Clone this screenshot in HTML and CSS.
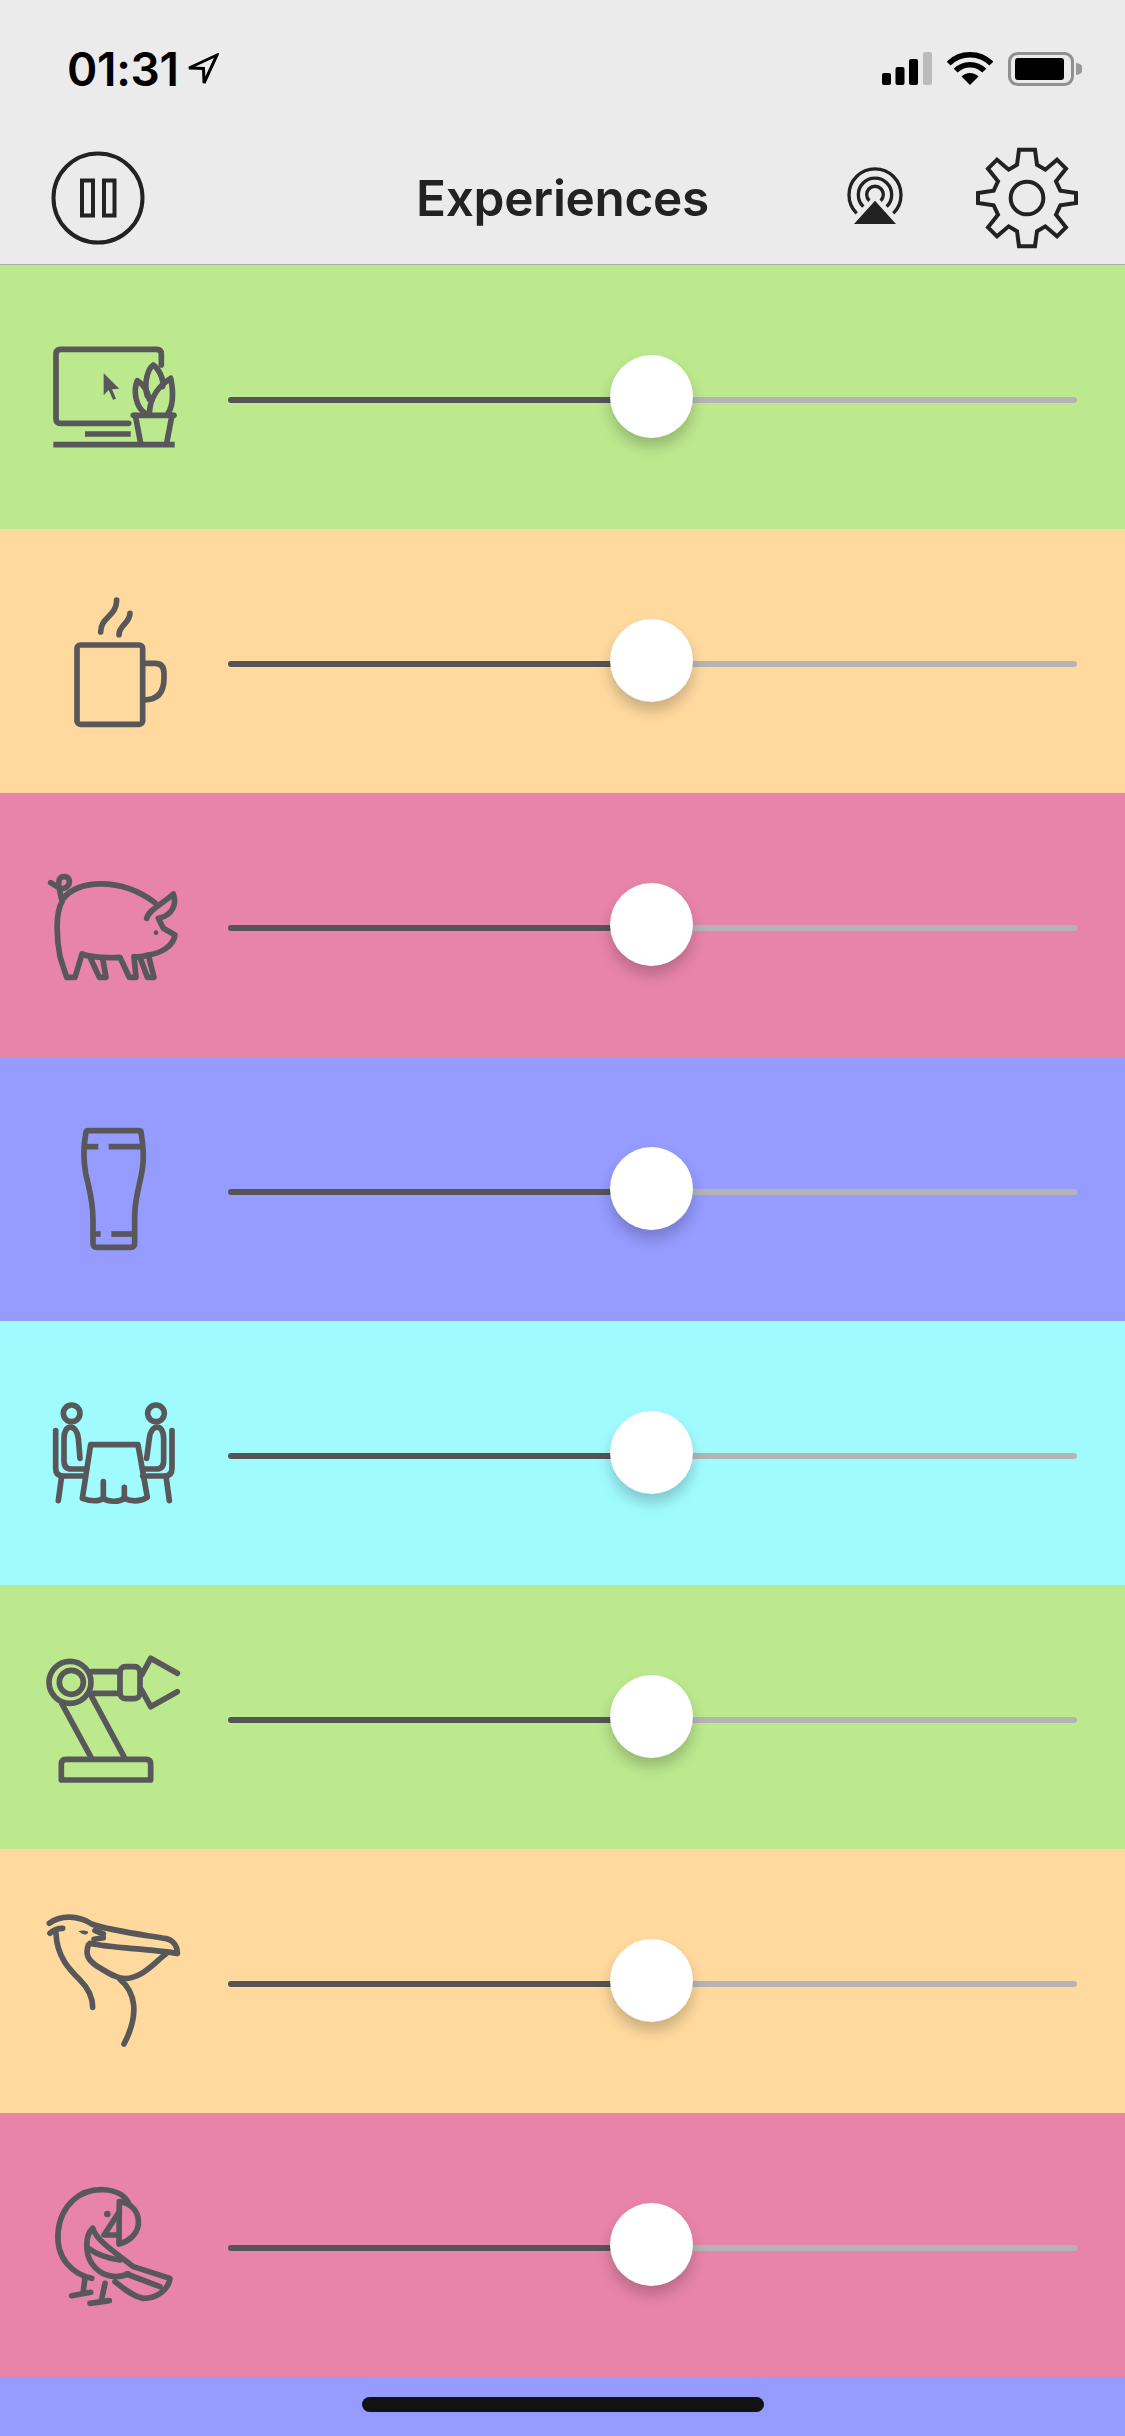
FILE: index.html
```html
<!DOCTYPE html>
<html lang="en">
<head>
  <meta charset="UTF-8">
  <meta name="viewport" content="width=device-width, initial-scale=1.0">
  <title>Experiences</title>
  <link rel="stylesheet" href="styles.css">
</head>
<body>
  <header class="top">
    <div class="status">
      <div class="status-left">
        <span class="time">01:31</span>
        <svg class="arrow" width="32" height="33" viewBox="0 0 32 33"><path d="M30 2 L2 15 L16.5 15.5 L17 30 Z"/></svg>
      </div>
      <div class="status-right">
        <svg width="50" height="33" viewBox="0 0 50 33">
          <rect x="0" y="21" width="9" height="12" rx="2"/>
          <rect x="13.5" y="15" width="9" height="18" rx="2"/>
          <rect x="27" y="7" width="9" height="26" rx="2"/>
          <rect class="bar-off" x="41" y="0" width="9" height="33" rx="2"/>
        </svg>
        <svg class="wifi" width="46" height="33" viewBox="0 0 46 33">
          <path class="wifi-band" d="M1.61 11.61 A30.25 30.25 0 0 1 44.39 11.61"/>
          <path class="wifi-band" d="M8.68 18.68 A20.25 20.25 0 0 1 37.32 18.68"/>
          <path d="M23 33 L14.51 24.51 A12 12 0 0 1 31.49 24.51 Z"/>
        </svg>
        <svg width="74" height="34" viewBox="0 0 74 34">
          <rect class="batt-case" x="1.5" y="1.5" width="63" height="31" rx="8"/>
          <rect x="7" y="6" width="49" height="22" rx="3"/>
          <path class="batt-nub" d="M68 11 A7 6 0 0 1 68 23 Z"/>
        </svg>
      </div>
    </div>
    <nav class="nav">
      <div class="nav-left">
        <svg class="nav-line" width="96" height="96" viewBox="0 0 96 96">
          <circle cx="48" cy="48" r="44.5"/>
          <rect x="32" y="30.5" width="11" height="35"/>
          <rect x="54" y="30.5" width="10.5" height="35"/>
        </svg>
      </div>
      <h1 class="title">Experiences</h1>
      <div class="nav-right">
        <svg class="nav-line airplay" width="60" height="66" viewBox="135 131 180 198">
          <path d="M170 276 A78 78 0 1 1 280 276"/>
          <path d="M190 256 A50 50 0 1 1 260 256"/>
          <path d="M208 238 A25 25 0 1 1 242 238"/>
          <path class="solid" d="M225 238 L288 308 H162 Z"/>
        </svg>
        <svg class="nav-line gear" width="104" height="104" viewBox="525 74 312 312">
          <g transform="translate(681 230)">
            <path d="M-24 -145 L24 -145 L30 -100 L55 -85 L90 -115 L117 -88 L87 -50 L100 -22 L147 -15 L147 15 L100 22 L87 50 L117 88 L90 115 L55 85 L30 100 L24 145 L-24 145 L-30 100 L-55 85 L-90 115 L-117 88 L-87 50 L-100 22 L-147 15 L-147 -15 L-100 -22 L-87 -50 L-117 -88 L-90 -115 L-55 -85 L-30 -100 Z"/>
            <circle r="49"/>
          </g>
        </svg>
      </div>
    </nav>
  </header>

  <main class="list">
    <section class="row green">
      <svg class="row-icon" viewBox="0 -135 600 792">
        <path d="M326 340 H122 Q108 340 108 326 V132 Q108 118 122 118 H410 Q424 118 424 132 V165"/>
        <path class="butt" d="M195 372 H332"/>
        <path class="butt" d="M100 404 H464"/>
        <path class="fill" d="M251 190 L298 236 L276 238 L288 266 L279 269 L266 240 L251 256 Z"/>
        <path d="M340 316 H462"/>
        <path d="M346 316 L362 400"/>
        <path d="M456 316 L440 400"/>
        <path d="M382 258 C370 215 385 175 400 165 C415 175 432 205 428 230"/>
        <path d="M376 310 C345 290 340 240 352 212 C368 222 382 240 388 268"/>
        <path d="M388 310 C390 260 420 225 452 205 C462 250 458 290 444 310"/>
      </svg>
      <div class="slider"><div class="track-on"></div><div class="track-off"></div><div class="thumb"></div></div>
    </section>

    <section class="row orange">
      <svg class="row-icon" viewBox="0 -153 600 792">
        <rect x="171" y="195" width="197" height="238" rx="10"/>
        <path d="M372 250 H405 Q432 250 432 280 V295 Q432 360 372 360"/>
        <path d="M242 156 C242 110 290 110 290 60"/>
        <path d="M297 164 C297 135 330 130 330 100"/>
      </svg>
      <div class="slider"><div class="track-on"></div><div class="track-off"></div><div class="thumb"></div></div>
    </section>

    <section class="row pink">
      <svg class="row-icon" viewBox="0 -201 600 792">
        <path d="M92 68 L118 84 C135 90 150 78 148 62 C146 48 125 45 118 58 C112 72 122 105 126 122"/>
        <path d="M130 116 C170 60 300 50 405 128"/>
        <path d="M126 125 C105 160 110 240 120 290 L140 352 H165 L186 282 C220 295 260 294 300 292 L328 352 H348 L342 290 C360 292 370 290 385 285 C420 280 460 260 465 225 L430 205 L415 175 C460 165 470 130 460 102 C430 130 385 150 380 175"/>
        <path d="M212 296 L238 352 H258 L248 296"/>
        <path d="M360 292 L382 352 H402 L385 285"/>
        <circle class="fill" cx="408" cy="218" r="7"/>
      </svg>
      <div class="slider"><div class="track-on"></div><div class="track-off"></div><div class="thumb"></div></div>
    </section>

    <section class="row blue">
      <svg class="row-icon" viewBox="0 -159 600 792">
        <path d="M204 62 H358 Q364 62 364 72 C370 110 372 140 368 170 C362 220 344 260 344 320 V400 Q344 412 332 412 H230 Q219 412 219 400 V330 C219 270 207 235 197 190 C190 150 192 100 197 72 Q198 62 204 62 Z"/>
        <path class="butt" d="M198 110 H235"/>
        <path class="butt" d="M266 110 H362"/>
        <path class="butt" d="M219 372 H242"/>
        <path class="butt" d="M274 372 H344"/>
      </svg>
      <div class="slider"><div class="track-on"></div><div class="track-off"></div><div class="thumb"></div></div>
    </section>

    <section class="row cyan">
      <svg class="row-icon" viewBox="0 -207 600 792">
        <circle cx="155" cy="70" r="25"/>
        <circle cx="408" cy="70" r="25"/>
        <path d="M212 164 H354 L382 322 C360 335 335 335 313 325 C295 338 265 335 250 325 C235 335 215 335 187 325 Z"/>
        <path d="M250 275 V325"/>
        <path d="M313 292 V325"/>
        <path d="M180 205 L175 145 C170 100 132 100 132 145 V212 Q132 237 155 237 H198"/>
        <path d="M107 122 V235 Q107 258 128 258 H195"/>
        <path d="M125 258 L115 332"/>
        <path d="M380 205 L388 145 C393 100 431 100 431 145 V212 Q431 237 408 237 H368"/>
        <path d="M456 122 V235 Q456 258 435 258 H368"/>
        <path d="M438 258 L448 332"/>
      </svg>
      <div class="slider"><div class="track-on"></div><div class="track-off"></div><div class="thumb"></div></div>
    </section>

    <section class="row green">
      <svg class="row-icon" viewBox="0 -165 600 792">
        <path d="M124 420 V372 Q124 358 138 358 H378 Q392 358 392 372 V420 Z"/>
        <circle cx="150" cy="127" r="63"/>
        <circle cx="154" cy="127" r="36"/>
        <path d="M125 190 L212 350"/>
        <path d="M215 170 L312 350"/>
        <path d="M215 95 H300"/>
        <path d="M212 160 H300"/>
        <rect x="300" y="80" width="60" height="96" rx="16"/>
        <path d="M365 105 L392 55 L472 100"/>
        <path d="M365 150 L392 200 L472 155"/>
      </svg>
      <div class="slider"><div class="track-on"></div><div class="track-off"></div><div class="thumb"></div></div>
    </section>

    <section class="row orange">
      <svg class="row-icon" viewBox="0 -153 600 792">
        <path d="M88 70 C120 45 175 45 215 72 C260 90 340 100 440 116 C462 122 472 140 472 160"/>
        <path d="M210 130 C270 145 380 145 472 160"/>
        <path d="M225 92 L250 102"/>
        <path d="M222 118 L250 113"/>
        <path d="M205 135 C195 165 205 180 230 198 C260 215 285 235 315 236 C370 232 400 190 440 160"/>
        <path d="M300 238 C345 275 360 340 312 432"/>
        <path d="M90 100 C95 95 110 85 128 85"/>
        <path d="M108 100 C110 170 150 210 180 240 C205 265 218 290 218 322"/>
        <path class="fill" d="M175 94 C185 90 200 92 205 96 C200 108 190 105 175 94 Z"/>
      </svg>
      <div class="slider"><div class="track-on"></div><div class="track-off"></div><div class="thumb"></div></div>
    </section>

    <section class="row pink">
      <svg class="row-icon" viewBox="0 -171 600 792">
        <path d="M325 98 C300 50 210 45 160 90 C105 140 100 230 140 280 C165 310 190 320 215 325"/>
        <path d="M298 95 C340 100 358 130 355 165 C350 195 325 215 297 222 Z"/>
        <path d="M298 125 L252 195 H296"/>
        <path d="M218 175 C195 195 195 250 215 280 C240 315 280 330 325 312"/>
        <path d="M218 175 C232 215 290 250 340 290 L450 325 C445 360 410 385 370 385 C340 380 310 355 285 335"/>
        <path d="M205 235 C225 250 260 265 300 270"/>
        <path d="M320 312 L420 350"/>
        <path d="M195 325 L190 362"/>
        <path d="M155 377 L212 367"/>
        <path d="M255 340 L245 388"/>
        <path d="M210 400 L268 392"/>
        <circle class="fill" cx="262" cy="132" r="10"/>
      </svg>
      <div class="slider"><div class="track-on"></div><div class="track-off"></div><div class="thumb"></div></div>
    </section>

    <div class="list-end blue"></div>
  </main>

  <div class="home-bar"></div>
</body>
</html>
```

FILE: styles.css
```css
html, body {
  margin: 0;
  height: 2436px;
  overflow: hidden;
}

body {
  display: flex;
  flex-direction: column;
  font-family: Inter, "Liberation Sans", sans-serif;
  background-color: #959bff;
  color: #222;
}

svg {
  display: block;
}

.top {
  background-color: #ebebeb;
  border-bottom: 1px solid #a3b0a8;
}

.status {
  height: 131px;
  box-sizing: border-box;
  padding: 6px 43px 0 67px;
  display: flex;
  justify-content: space-between;
  align-items: center;
}

.status-left {
  display: flex;
  align-items: center;
  gap: 8px;
}

.time {
  font-size: 46px;
  font-weight: 600;
  color: #000;
  letter-spacing: -0.3px;
}

.arrow {
  margin-top: 2px;
}

.arrow path {
  fill: none;
  stroke: #000;
  stroke-width: 3;
}

.status-right {
  display: flex;
  align-items: center;
  gap: 15px;
}

.bar-off {
  fill: #bbb;
}

.wifi-band {
  fill: none;
  stroke: #000;
  stroke-width: 5.5;
}

.batt-case {
  fill: none;
  stroke: #8f8f8f;
  stroke-width: 3;
}

.batt-nub {
  fill: #999;
}

.nav {
  height: 133px;
  display: grid;
  grid-template-columns: 1fr auto 1fr;
  align-items: center;
}

.nav-left {
  padding-left: 50px;
}

.title {
  margin: 0;
  font-size: 49.5px;
  font-weight: 600;
  letter-spacing: -0.3px;
}

.nav-right {
  display: flex;
  justify-content: flex-end;
  align-items: center;
  gap: 70px;
  padding-right: 46px;
}

.nav-line {
  fill: none;
  stroke: #222;
  stroke-width: 4;
}

.airplay {
  stroke-width: 10;
}

.gear {
  stroke-width: 12;
}

.airplay .solid {
  fill: #222;
  stroke: none;
}

.list {
  flex: 1;
  display: flex;
  flex-direction: column;
}

.row {
  height: 264px;
  flex: none;
  display: flex;
  align-items: center;
  padding: 0 48px 0 20px;
}

.list-end {
  flex: 1;
}

.green { background-color: #bce88e; }
.orange { background-color: #ffd99e; }
.pink { background-color: #e884a8; }
.blue { background-color: #959bff; }
.cyan { background-color: #a0fbff; }

.row-icon {
  width: 200px;
  height: 264px;
  flex: none;
  margin-right: 8px;
  fill: none;
  stroke: #58585a;
  stroke-width: 17;
  stroke-linecap: round;
  stroke-linejoin: round;
}

.row-icon .fill {
  fill: #58585a;
  stroke: none;
}

.row-icon .butt {
  stroke-linecap: butt;
}

.slider {
  flex: 1;
  height: 83px;
  position: relative;
  display: flex;
  align-items: center;
}

.track-on,
.track-off {
  flex: 1;
  height: 6px;
  margin-top: 6px;
}

.track-on {
  background-color: #555;
  border-radius: 3px 0 0 3px;
}

.track-off {
  background-color: #b4b4b4;
  border-radius: 0 3px 3px 0;
}

.thumb {
  position: absolute;
  top: -1px;
  left: 50%;
  width: 83px;
  height: 83px;
  margin-left: -42.5px;
  border-radius: 50%;
  background-color: #fff;
  box-shadow: 0 9px 14px rgba(0, 0, 0, 0.2);
}

.home-bar {
  position: absolute;
  left: 362px;
  top: 2397px;
  width: 402px;
  height: 15px;
  border-radius: 8px;
  background-color: #121212;
}
```
